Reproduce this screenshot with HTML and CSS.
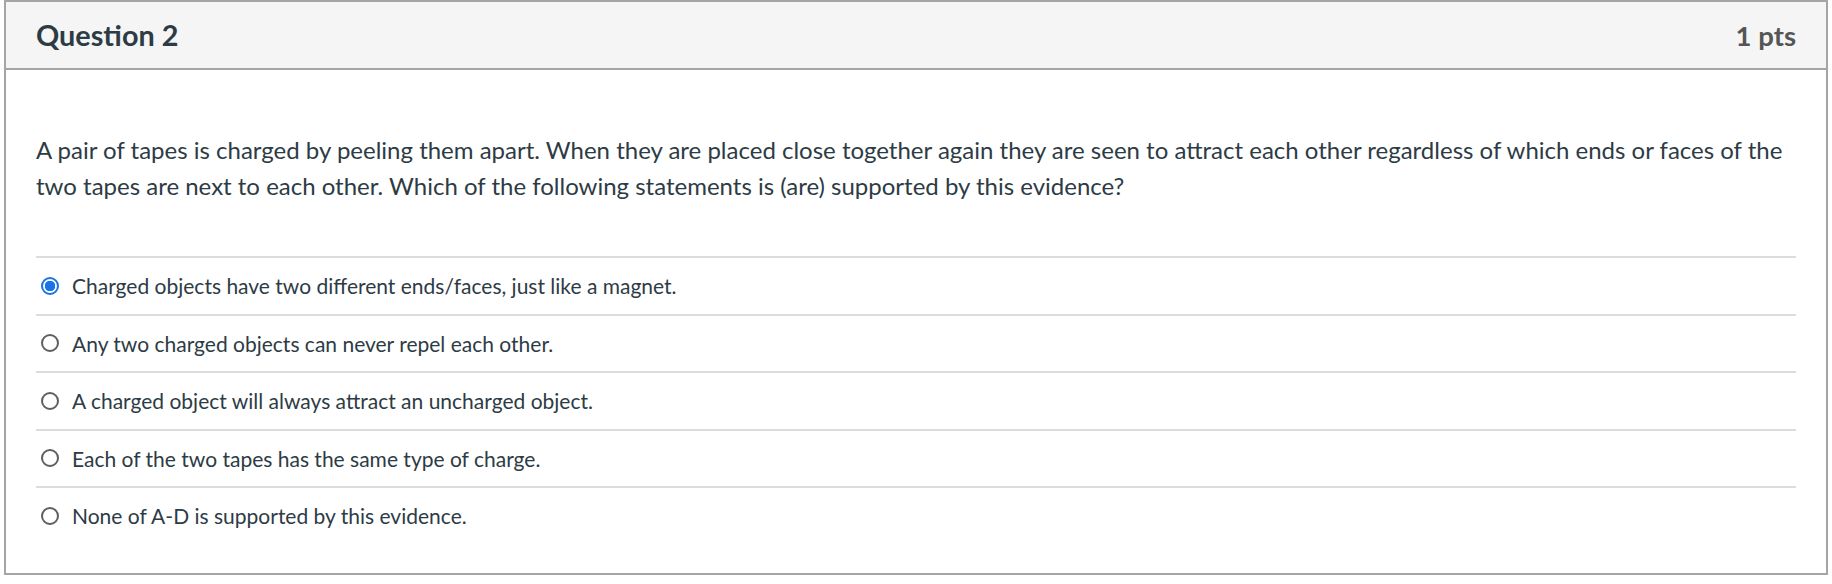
FILE: index.html
```html
<!DOCTYPE html>
<html lang="en">
<head>
  <meta charset="UTF-8" />
  <title>Question 2</title>
  <link rel="stylesheet" href="styles.css">
</head>
<body>

  <div class="question">
    <div class="question-header">
      <h2 class="question-title">Question 2</h2>
      <span class="question-points">1 pts</span>
    </div>

    <div class="question-body">
      <p class="question-text">A pair of tapes is charged by peeling them apart. When they are placed close together again they are seen to attract each other regardless of which ends or faces of the two tapes are next to each other. Which of the following statements is (are) supported by this evidence?</p>

      <div class="answers">
        <label class="answer">
          <span class="radio checked"></span>
          <span class="answer-text">Charged objects have two different ends/faces, just like a magnet.</span>
        </label>
        <label class="answer">
          <span class="radio"></span>
          <span class="answer-text">Any two charged objects can never repel each other.</span>
        </label>
        <label class="answer">
          <span class="radio"></span>
          <span class="answer-text">A charged object will always attract an uncharged object.</span>
        </label>
        <label class="answer">
          <span class="radio"></span>
          <span class="answer-text">Each of the two tapes has the same type of charge.</span>
        </label>
        <label class="answer">
          <span class="radio"></span>
          <span class="answer-text">None of A-D is supported by this evidence.</span>
        </label>
      </div>
    </div>
  </div>

</body>
</html>
```

FILE: styles.css
```css
body {
  margin: 0;
  padding: 0 4px;
  background: #fff;
  font-family: Lato, "Open Sans", Arial, sans-serif;
  color: #2d3b45;
}
.question {
  border: 2px solid #a5a5a5;
  height: 575px;
  box-sizing: border-box;
}
.question-header {
  display: flex;
  justify-content: space-between;
  align-items: center;
  height: 66px;
  padding: 0 30px;
  background: #f5f5f5;
  border-bottom: 2px solid #a5a5a5;
}
.question-title {
  margin: 0;
  font-size: 28.8px;
  font-weight: bold;
  color: #2d3b45;
}
.question-points {
  font-size: 27.5px;
  font-weight: bold;
  color: #555;
}
.question-body {
  padding: 62px 30px 0;
}
.question-text {
  margin: 0 0 52px;
  font-size: 24px;
  line-height: 36px;
}
.answer {
  display: flex;
  align-items: center;
  height: 55.5px;
  border-top: 2px solid #dcdcdc;
  font-size: 21px;
}
.radio {
  width: 18px;
  height: 18px;
  box-sizing: border-box;
  margin: 0 13px 0 5px;
  border: 2px solid #5f5f5f;
  border-radius: 50%;
  background: #fff;
}
.radio.checked {
  border: 2px solid #1a73e8;
  background: radial-gradient(circle, #1a73e8 0 5px, #fff 5.5px);
}
```
